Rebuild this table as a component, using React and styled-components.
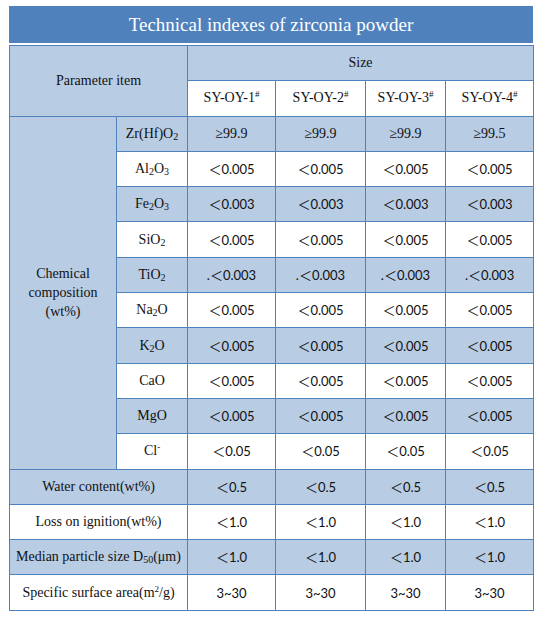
import React from 'react'
import styled, { createGlobalStyle } from 'styled-components'

const GlobalStyle = createGlobalStyle`
  html, body {
    margin: 0;
    padding: 0;
    background: #ffffff;
  }
`

const Page = styled.div`
  padding: 6px 7px 0 9px;
  width: 524px;
  font-family: 'Liberation Serif', 'Times New Roman', serif;
  color: #111;
`

const Title = styled.div`
  height: 37px;
  display: flex;
  align-items: center;
  justify-content: center;
  background: #4f81bd;
  color: #ffffff;
  font-size: 19px;
  border-bottom: 2px solid #ffffff;
`

const Table = styled.table`
  width: 524px;
  border-collapse: collapse;
  table-layout: fixed;
  border: 1px solid #4f81bd;
`

const Row = styled.tr`
  height: 35.3px;
`

const Cell = styled.td`
  border: 1px solid #4f81bd;
  padding: 0;
  text-align: center;
  vertical-align: middle;
  line-height: ${(p) => (p.$tall ? '19px' : '16px')};
  background: ${(p) => (p.$shade ? '#b8cce4' : '#ffffff')};
  font-size: ${(p) => (p.$sans ? '13px' : '14px')};
  font-family: ${(p) =>
    p.$sans
      ? "'Lato', 'Noto Sans CJK SC', sans-serif"
      : "'Liberation Serif', 'Noto Sans CJK SC', serif"};
`

const Sub = styled.sub`
  font-size: 10px;
  vertical-align: -2px;
  line-height: 0;
`

const Sup = styled.sup`
  font-size: 9px;
  vertical-align: 5px;
  line-height: 0;
`

const grades = ['SY-OY-1', 'SY-OY-2', 'SY-OY-3', 'SY-OY-4']

const chemistry = [
  { name: <>Zr(Hf)O<Sub>2</Sub></>, values: ['≥99.9', '≥99.9', '≥99.9', '≥99.5'], serif: true },
  { name: <>Al<Sub>2</Sub>O<Sub>3</Sub></>, values: ['＜0.005', '＜0.005', '＜0.005', '＜0.005'] },
  { name: <>Fe<Sub>2</Sub>O<Sub>3</Sub></>, values: ['＜0.003', '＜0.003', '＜0.003', '＜0.003'] },
  { name: <>SiO<Sub>2</Sub></>, values: ['＜0.005', '＜0.005', '＜0.005', '＜0.005'] },
  { name: <>TiO<Sub>2</Sub></>, values: ['.＜0.003', '.＜0.003', '.＜0.003', '.＜0.003'] },
  { name: <>Na<Sub>2</Sub>O</>, values: ['＜0.005', '＜0.005', '＜0.005', '＜0.005'] },
  { name: <>K<Sub>2</Sub>O</>, values: ['＜0.005', '＜0.005', '＜0.005', '＜0.005'] },
  { name: 'CaO', values: ['＜0.005', '＜0.005', '＜0.005', '＜0.005'] },
  { name: 'MgO', values: ['＜0.005', '＜0.005', '＜0.005', '＜0.005'] },
  { name: <>Cl<Sup>-</Sup></>, values: ['＜0.05', '＜0.05', '＜0.05', '＜0.05'] },
]

const physical = [
  { label: 'Water content(wt%)', values: ['＜0.5', '＜0.5', '＜0.5', '＜0.5'] },
  { label: 'Loss on ignition(wt%)', values: ['＜1.0', '＜1.0', '＜1.0', '＜1.0'] },
  { label: <>Median particle size D<Sub>50</Sub>(μm)</>, values: ['＜1.0', '＜1.0', '＜1.0', '＜1.0'] },
  { label: <>Specific surface area(m<Sup>2</Sup>/g)</>, values: ['3~30', '3~30', '3~30', '3~30'] },
]

const App = () => (
  <Page>
    <GlobalStyle />
    <Title>Technical indexes of zirconia powder</Title>
    <Table>
      <colgroup>
        <col style={{ width: 107 }} />
        <col style={{ width: 71 }} />
        <col style={{ width: 88 }} />
        <col style={{ width: 90 }} />
        <col style={{ width: 80 }} />
        <col style={{ width: 88 }} />
      </colgroup>
      <tbody>
        <Row>
          <Cell $shade colSpan={2} rowSpan={2}>Parameter item</Cell>
          <Cell $shade colSpan={4}>Size</Cell>
        </Row>
        <Row>
          {grades.map((g) => (
            <Cell key={g}>
              {g}
              <Sup>#</Sup>
            </Cell>
          ))}
        </Row>
        {chemistry.map((item, i) => (
          <Row key={i}>
            {i === 0 && (
              <Cell $shade $tall rowSpan={chemistry.length}>
                Chemical
                <br />
                composition
                <br />
                (wt%)
              </Cell>
            )}
            <Cell $shade={i % 2 === 0}>{item.name}</Cell>
            {item.values.map((v, j) => (
              <Cell key={j} $shade={i % 2 === 0} $sans={!item.serif}>
                {v}
              </Cell>
            ))}
          </Row>
        ))}
        {physical.map((item, i) => (
          <Row key={i}>
            <Cell $shade={i % 2 === 0} colSpan={2}>{item.label}</Cell>
            {item.values.map((v, j) => (
              <Cell key={j} $shade={i % 2 === 0} $sans>
                {v}
              </Cell>
            ))}
          </Row>
        ))}
      </tbody>
    </Table>
  </Page>
)

export default App
